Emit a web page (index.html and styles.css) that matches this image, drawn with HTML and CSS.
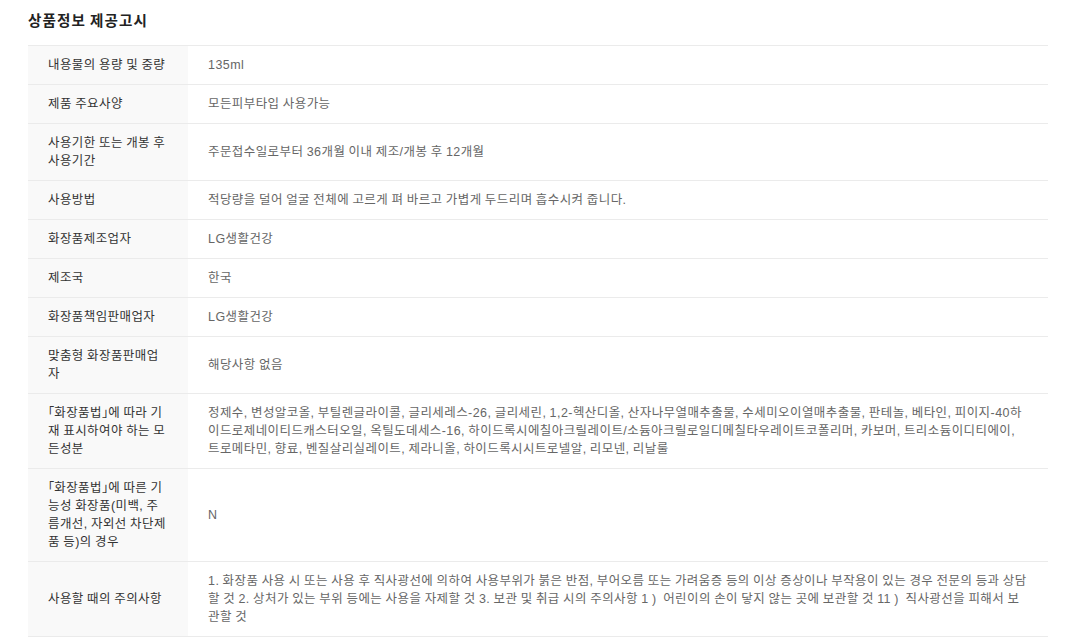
FILE: index.html
```html
<!DOCTYPE html>
<html lang="ko">
<head>
<meta charset="utf-8">
<link rel="stylesheet" href="styles.css">
</head>
<body>
<div class="notice">
  <h2 class="notice-title">상품정보 제공고시</h2>
  <table class="info-table">
    <tbody>
      <tr><th>내용물의 용량 및 중량</th><td>135ml</td></tr>
      <tr><th>제품 주요사양</th><td>모든피부타입 사용가능</td></tr>
      <tr><th>사용기한 또는 개봉 후 사용기간</th><td>주문접수일로부터 36개월 이내 제조/개봉 후 12개월</td></tr>
      <tr><th>사용방법</th><td>적당량을 덜어 얼굴 전체에 고르게 펴 바르고 가볍게 두드리며 흡수시켜 줍니다.</td></tr>
      <tr><th>화장품제조업자</th><td>LG생활건강</td></tr>
      <tr><th>제조국</th><td>한국</td></tr>
      <tr><th>화장품책임판매업자</th><td>LG생활건강</td></tr>
      <tr><th>맞춤형 화장품판매업자</th><td>해당사항 없음</td></tr>
      <tr><th><span class="br">「</span>화장품법<span class="br">」</span>에 따라 기재 표시하여야 하는 모든성분</th><td>정제수, 변성알코올, 부틸렌글라이콜, 글리세레스-26, 글리세린, 1,2-헥산디올, 산자나무열매추출물, 수세미오이열매추출물, 판테놀, 베타인, 피이지-40하이드로제네이티드캐스터오일, 옥틸도데세스-16, 하이드록시에칠아크릴레이트/소듐아크릴로일디메칠타우레이트코폴리머, 카보머, 트리소듐이디티에이, 트로메타민, 향료, 벤질살리실레이트, 제라니올, 하이드록시시트로넬알, 리모넨, 리날룰</td></tr>
      <tr><th><span class="br">「</span>화장품법<span class="br">」</span>에 따른 기능성 화장품(미백, 주름개선, 자외선 차단제품 등)의 경우</th><td>N</td></tr>
      <tr><th>사용할 때의 주의사항</th><td>1. 화장품 사용 시 또는 사용 후 직사광선에 의하여 사용부위가 붉은 반점, 부어오름 또는 가려움증 등의 이상 증상이나 부작용이 있는 경우 전문의 등과 상담할 것 2. 상처가 있는 부위 등에는 사용을 자제할 것 3. 보관 및 취급 시의 주의사항 1 ) &nbsp;어린이의 손이 닿지 않는 곳에 보관할 것 11 ) &nbsp;직사광선을 피해서 보관할 것</td></tr>
    </tbody>
  </table>
</div>
</body>
</html>
```

FILE: styles.css
```css
html, body {
  margin: 0;
  padding: 0;
  background: #ffffff;
}

body {
  font-family: "Liberation Sans", "Noto Sans CJK KR", sans-serif;
  font-size: 12px;
  color: #333333;
  font-size-adjust: cap-height 0.716;
}

.notice {
  padding: 0 22px 0 28px;
}

.notice-title {
  margin: 11px 0 14px;
  font-size: 14px;
  line-height: 20px;
  font-weight: bold;
  color: #222222;
  letter-spacing: 1.1px;
  word-spacing: -1.2px;
}

.info-table {
  width: 1020px;
  border-collapse: collapse;
  table-layout: fixed;
}

.info-table tr {
  border-top: 1px solid #ebebeb;
  border-bottom: 1px solid #ebebeb;
}

.info-table th,
.info-table td {
  padding: 10px 20px;
  line-height: 18px;
  vertical-align: middle;
  text-align: left;
  font-size: 12px;
  letter-spacing: 0.45px;
  word-spacing: -0.6px;
}

.info-table th {
  width: 120px;
  background: #f9f9f9;
  font-weight: normal;
  color: #333333;
}

.info-table td {
  color: #666666;
}

.br {
  font-feature-settings: "halt" 1;
  letter-spacing: 0;
}
```
